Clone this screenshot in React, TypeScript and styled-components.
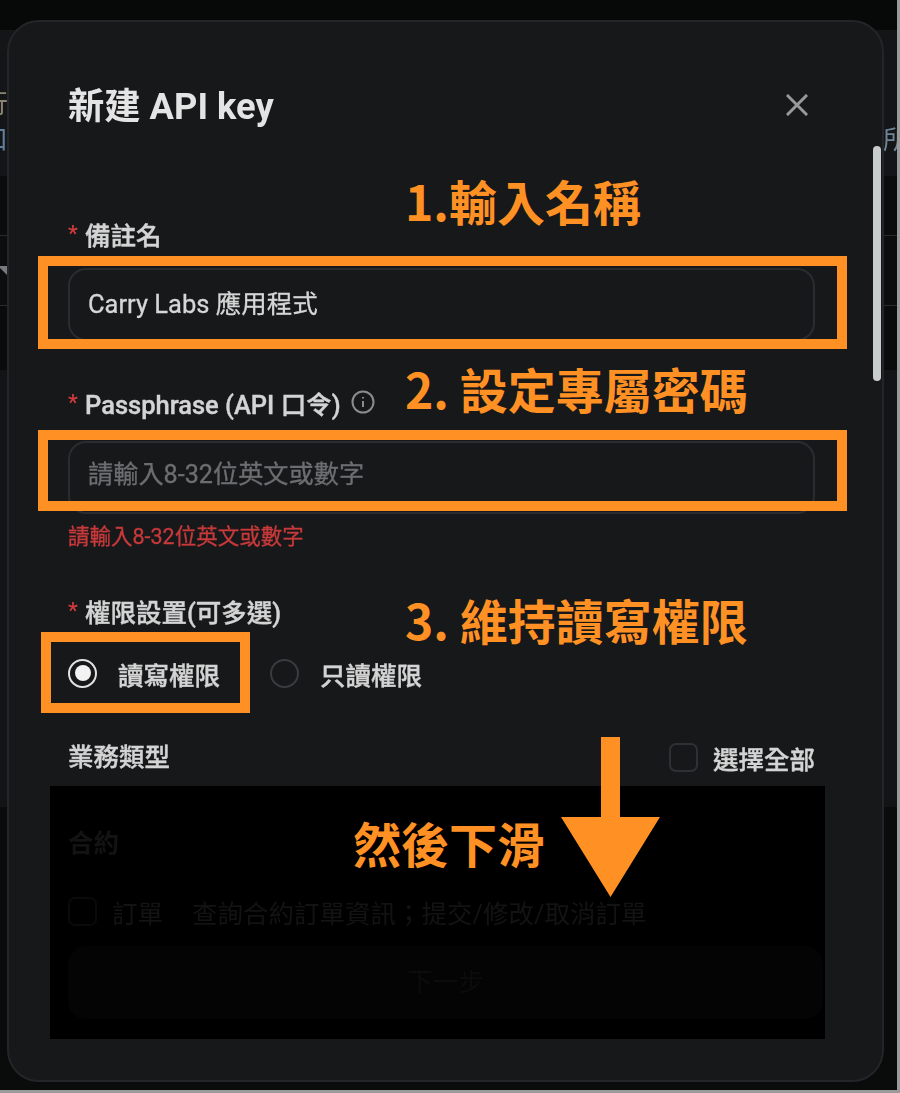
import React from "react";
import styled, { createGlobalStyle } from "styled-components";

const GlobalStyle = createGlobalStyle`
  html, body {
    margin: 0;
    padding: 0;
    background: #0a0b0b;
  }
  body {
    font-family: Roboto, "Noto Sans CJK TC", sans-serif;
  }
`;

const ORANGE = "#ff9124";

const Page = styled.div`
  position: relative;
  width: 900px;
  height: 1093px;
  overflow: hidden;
  background: #0a0b0b;
`;

/* what is left of the page behind the dialog */
const Backdrop = styled.div`
  display: flex;
  flex-direction: column;
  width: 897px;
  height: 1090px;
  overflow: hidden;
  filter: blur(0.6px);
`;

const Band = styled.div<{ $h: number; $bg: string; $line?: boolean; $pad?: number }>`
  display: flex;
  flex-direction: column;
  justify-content: center;
  flex: none;
  height: ${(p) => p.$h}px;
  padding-top: ${(p) => p.$pad ?? 0}px;
  background: ${(p) => p.$bg};
  border-bottom: ${(p) => (p.$line ? "1px solid #2a2b2d" : "none")};
  box-sizing: border-box;
`;

const PeekRow = styled.div`
  display: flex;
  justify-content: space-between;
  height: 36px;
  line-height: 36px;
  font-size: 26px;
  overflow: hidden;
`;

const PeekLeft = styled.span<{ $color: string }>`
  margin-left: -18px;
  color: ${(p) => p.$color};
`;

const PeekRight = styled.span`
  margin-right: -12px;
  color: #6f8597;
`;

const PeekCaret = styled.span`
  width: 0;
  height: 0;
  margin-left: -2px;
  border-left: 10px solid transparent;
  border-right: 10px solid transparent;
  border-top: 10px solid #77797c;
`;

const EdgeRight = styled.div`
  position: absolute;
  top: 0;
  right: 0;
  width: 3px;
  height: 100%;
  background: #9a9a9a;
`;

const EdgeBottom = styled.div`
  position: absolute;
  left: 0;
  bottom: 0;
  width: 100%;
  height: 3px;
  background: #9a9a9a;
`;

const Modal = styled.div`
  position: absolute;
  left: 7px;
  top: 20px;
  width: 877px;
  height: 1062px;
  box-sizing: border-box;
  padding: 0 67px 0 59px;
  background: #17181a;
  border: 2px solid #242528;
  border-radius: 32px;
  overflow: hidden;
`;

const ModalBody = styled.div`
  display: flex;
  flex-direction: column;
  filter: blur(0.5px);
`;

const Header = styled.div`
  display: flex;
  align-items: center;
  justify-content: space-between;
  height: 46px;
  margin-top: 60px;
  padding-right: 7px;
`;

const Title = styled.h1`
  margin: -4px 0 0;
  font-size: 36.300px;
  font-weight: 700;
  color: #e4e4e4;
`;

const CloseIcon = styled.svg`
  display: block;
  width: 22px;
  height: 22px;
  stroke: #98999b;
  stroke-width: 3;
  stroke-linecap: square;
  fill: none;
`;

const FieldLabel = styled.div<{ $top: number }>`
  display: flex;
  align-items: center;
  height: 32px;
  margin-top: ${(p) => p.$top}px;
  font-size: 25.5px;
  font-weight: 500;
  color: #d4d4d4;
  white-space: nowrap;
  -webkit-text-stroke: 0.4px #d4d4d4;
`;

const Star = styled.span`
  width: 17px;
  flex: none;
  font-size: 22px;
  color: #d23b3b;
  -webkit-text-stroke: 0;
`;

const InfoIcon = styled.svg`
  width: 24px;
  height: 24px;
  margin-left: 10px;
  stroke: #8b8c8e;
  stroke-width: 2;
  fill: none;
`;

const Input = styled.div<{ $placeholder?: boolean; $top: number }>`
  display: flex;
  align-items: center;
  box-sizing: border-box;
  height: 73px;
  margin-top: ${(p) => p.$top}px;
  padding: 0 18px ${(p) => (p.$placeholder ? 12 : 6)}px;
  border: 2px solid #2b2c2f;
  border-radius: 18px;
  font-size: ${(p) => (p.$placeholder ? 25.2 : 25.5)}px;
  color: ${(p) => (p.$placeholder ? "#6d6e70" : "#d6d6d6")};
  -webkit-text-stroke: 0.3px ${(p) => (p.$placeholder ? "#6d6e70" : "#d6d6d6")};
`;

const ErrorText = styled.div`
  height: 30px;
  line-height: 30px;
  margin-top: 8px;
  font-size: 21.500px;
  color: #c8393b;
  -webkit-text-stroke: 0.3px #c8393b;
`;

const RadioRow = styled.div`
  display: flex;
  align-items: center;
  height: 30px;
  margin-top: 32px;
`;

const RadioOption = styled.div`
  display: flex;
  align-items: center;
  gap: 21px;
  margin-right: 50px;
  font-size: 25.5px;
  font-weight: 500;
  color: #d4d4d4;
  -webkit-text-stroke: 0.4px #d4d4d4;
`;

const Radio = styled.span<{ $on?: boolean }>`
  display: flex;
  align-items: center;
  justify-content: center;
  box-sizing: border-box;
  width: 29px;
  height: 29px;
  border: 2px solid ${(p) => (p.$on ? "#e2e2e2" : "#3a3b3e")};
  border-radius: 50%;
  &::after {
    content: "";
    display: ${(p) => (p.$on ? "block" : "none")};
    width: 16px;
    height: 16px;
    border-radius: 50%;
    background: #f2f2f2;
  }
`;

const TypeRow = styled.div`
  display: flex;
  align-items: center;
  justify-content: space-between;
  height: 34px;
  margin-top: 52px;
`;

const TypeTitle = styled.span`
  margin-top: -6px;
  font-size: 25.5px;
  font-weight: 500;
  color: #d4d4d4;
  -webkit-text-stroke: 0.4px #d4d4d4;
`;

const SelectAll = styled.label`
  display: flex;
  align-items: center;
  gap: 15px;
  font-size: 25.5px;
  font-weight: 500;
  color: #d4d4d4;
  -webkit-text-stroke: 0.4px #d4d4d4;
`;

const Checkbox = styled.span<{ $dim?: boolean }>`
  flex: none;
  box-sizing: border-box;
  width: 29px;
  height: 29px;
  border: 2px solid ${(p) => (p.$dim ? "#0a0a0a" : "#2e3033")};
  border-radius: 7px;
`;

/* lower part of the dialog, blacked out in the picture */
const Covered = styled.div`
  display: flex;
  flex-direction: column;
  height: 253px;
  margin: 12px -10px 0 -18px;
  padding: 0 2px 0 18px;
  background: #000;
  color: #131313;
`;

const CoveredHead = styled.div`
  margin-top: 39px;
  height: 36px;
  line-height: 36px;
  font-size: 25.5px;
  font-weight: 700;
`;

const OrderRow = styled.div`
  display: flex;
  align-items: center;
  gap: 15px;
  height: 30px;
  margin-top: 35px;
  font-size: 25.5px;
`;

const OrderNote = styled.span`
  margin-left: 14px;
`;

const NextButton = styled.div`
  display: flex;
  align-items: center;
  justify-content: center;
  height: 73px;
  margin-top: 20px;
  padding-bottom: 6px;
  box-sizing: border-box;
  border-radius: 18px;
  background: #040404;
  font-size: 25.5px;
  color: #0c0c0c;
`;

const ScrollThumb = styled.div`
  position: absolute;
  top: 146px;
  left: 873px;
  width: 8px;
  height: 235px;
  border-radius: 4px;
  background: #c8cccc;
`;

/* hand-drawn marks someone put over the screenshot */
const MarkBox = styled.div<{ $x: number; $y: number; $w: number; $h: number }>`
  position: absolute;
  left: ${(p) => p.$x}px;
  top: ${(p) => p.$y}px;
  width: ${(p) => p.$w}px;
  height: ${(p) => p.$h}px;
  box-sizing: border-box;
  border: 10px solid ${ORANGE};
`;

const MarkText = styled.div<{ $x: number; $y: number }>`
  position: absolute;
  left: ${(p) => p.$x}px;
  top: ${(p) => p.$y}px;
  font-family: "Noto Sans CJK TC", sans-serif;
  font-size: 48px;
  line-height: 60px;
  font-weight: 700;
  color: ${ORANGE};
  white-space: nowrap;
`;

const MarkArrow = styled.svg`
  position: absolute;
  left: 561px;
  top: 737px;
  width: 99px;
  height: 160px;
  fill: ${ORANGE};
`;

export default function App() {
  return (
    <Page>
      <GlobalStyle />
      <Backdrop>
        <Band $h={30} $bg="#070808" />
        <Band $h={146} $bg="#141516" $pad={38}>
          <PeekRow>
            <PeekLeft $color="#8a8475">行</PeekLeft>
          </PeekRow>
          <PeekRow>
            <PeekLeft $color="#5f7f9c">口</PeekLeft>
            <PeekRight>所</PeekRight>
          </PeekRow>
        </Band>
        <Band $h={60} $bg="#0b0c0c" $line />
        <Band $h={70} $bg="#0c0d0d" $line>
          <PeekCaret />
        </Band>
        <Band $h={64} $bg="#0a0b0b" />
        <Band $h={437} $bg="#131415" />
        <Band $h={283} $bg="#0a0b0b" />
      </Backdrop>
      <EdgeRight />
      <EdgeBottom />

      <Modal>
        <ModalBody>
          <Header>
            <Title>新建 API key</Title>
            <CloseIcon viewBox="0 0 22 22">
              <path d="M2 2l18 18M20 2L2 20" />
            </CloseIcon>
          </Header>

          <FieldLabel $top={89}>
            <Star>*</Star>備註名
          </FieldLabel>
          <Input $top={19}>Carry Labs 應用程式</Input>

          <FieldLabel $top={45}>
            <Star>*</Star>Passphrase (API 口令)
            <InfoIcon viewBox="0 0 24 24">
              <circle cx="12" cy="12" r="10.5" />
              <path d="M12 11v6M12 7v1.6" />
            </InfoIcon>
          </FieldLabel>
          <Input $placeholder $top={23}>請輸入8-32位英文或數字</Input>
          <ErrorText>請輸入8-32位英文或數字</ErrorText>

          <FieldLabel $top={42}>
            <Star>*</Star>權限設置(可多選)
          </FieldLabel>
          <RadioRow>
            <RadioOption>
              <Radio $on />
              讀寫權限
            </RadioOption>
            <RadioOption>
              <Radio />
              只讀權限
            </RadioOption>
          </RadioRow>

          <TypeRow>
            <TypeTitle>業務類型</TypeTitle>
            <SelectAll>
              <Checkbox />
              選擇全部
            </SelectAll>
          </TypeRow>

          <Covered>
            <CoveredHead>合約</CoveredHead>
            <OrderRow>
              <Checkbox $dim />
              訂單
              <OrderNote>查詢合約訂單資訊；提交/修改/取消訂單</OrderNote>
            </OrderRow>
            <NextButton>下一步</NextButton>
          </Covered>
        </ModalBody>
      </Modal>
      <ScrollThumb />

      <MarkBox $x={38} $y={256} $w={809} $h={93} />
      <MarkBox $x={38} $y={430} $w={809} $h={81} />
      <MarkBox $x={41} $y={632} $w={209} $h={81} />
      <MarkText $x={405} $y={170}>1.輸入名稱</MarkText>
      <MarkText $x={405} $y={358}>2. 設定專屬密碼</MarkText>
      <MarkText $x={405} $y={589}>3. 維持讀寫權限</MarkText>
      <MarkText $x={353} $y={812}>然後下滑</MarkText>
      <MarkArrow viewBox="0 0 99 160">
        <path d="M40 0h19v80h40L49.500 160 0 80h40z" />
      </MarkArrow>
    </Page>
  );
}
